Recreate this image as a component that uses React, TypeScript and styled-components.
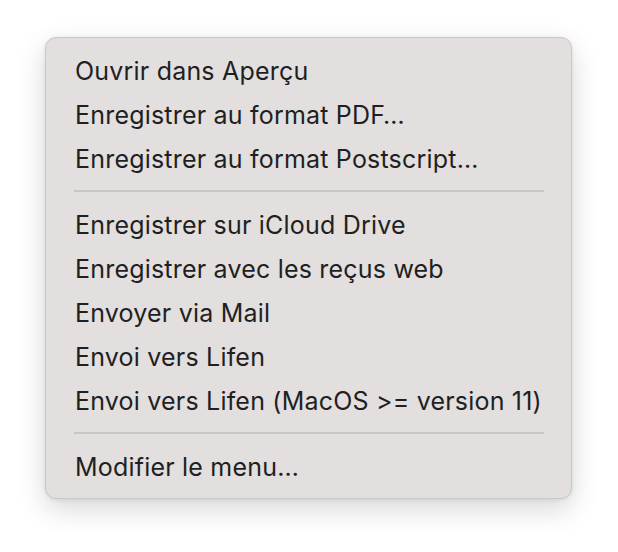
import React from "react";
import styled, { createGlobalStyle } from "styled-components";

const GlobalStyle = createGlobalStyle`
  html, body {
    margin: 0;
    padding: 0;
    background: #ffffff;
  }
  body {
    font-family: Inter, "Noto Sans", sans-serif;
    -webkit-font-smoothing: antialiased;
  }
`;

const Page = styled.div`
  width: 618px;
  height: 552px;
  padding: 37px 0 0 45px;
  box-sizing: border-box;
`;

const Menu = styled.div`
  width: 527px;
  box-sizing: border-box;
  padding: 11px 0 9px;
  background: #e3dfde;
  border: 1px solid #cbc7c6;
  border-radius: 11px;
  box-shadow: 0 10px 28px rgba(0, 0, 0, 0.16), 0 1px 4px rgba(0, 0, 0, 0.08);
  display: flex;
  flex-direction: column;
`;

const Item = styled.div`
  height: 44px;
  display: flex;
  align-items: center;
  padding: 0 29px;
  font-size: 25px;
  letter-spacing: 0.2px;
  color: #211f1f;
  white-space: nowrap;
`;

const Separator = styled.div`
  height: 2px;
  margin: 9px 27px 11px 28px;
  background: #cac6c5;
`;

const groups: string[][] = [
  [
    "Ouvrir dans Aperçu",
    "Enregistrer au format PDF…",
    "Enregistrer au format Postscript…",
  ],
  [
    "Enregistrer sur iCloud Drive",
    "Enregistrer avec les reçus web",
    "Envoyer via Mail",
    "Envoi vers Lifen",
    "Envoi vers Lifen (MacOS >= version 11)",
  ],
  ["Modifier le menu…"],
];

export default function App() {
  return (
    <>
      <GlobalStyle />
      <Page>
        <Menu>
          {groups.map((group, gi) => (
            <React.Fragment key={gi}>
              {gi > 0 && <Separator />}
              {group.map((label) => (
                <Item key={label}>{label}</Item>
              ))}
            </React.Fragment>
          ))}
        </Menu>
      </Page>
    </>
  );
}
